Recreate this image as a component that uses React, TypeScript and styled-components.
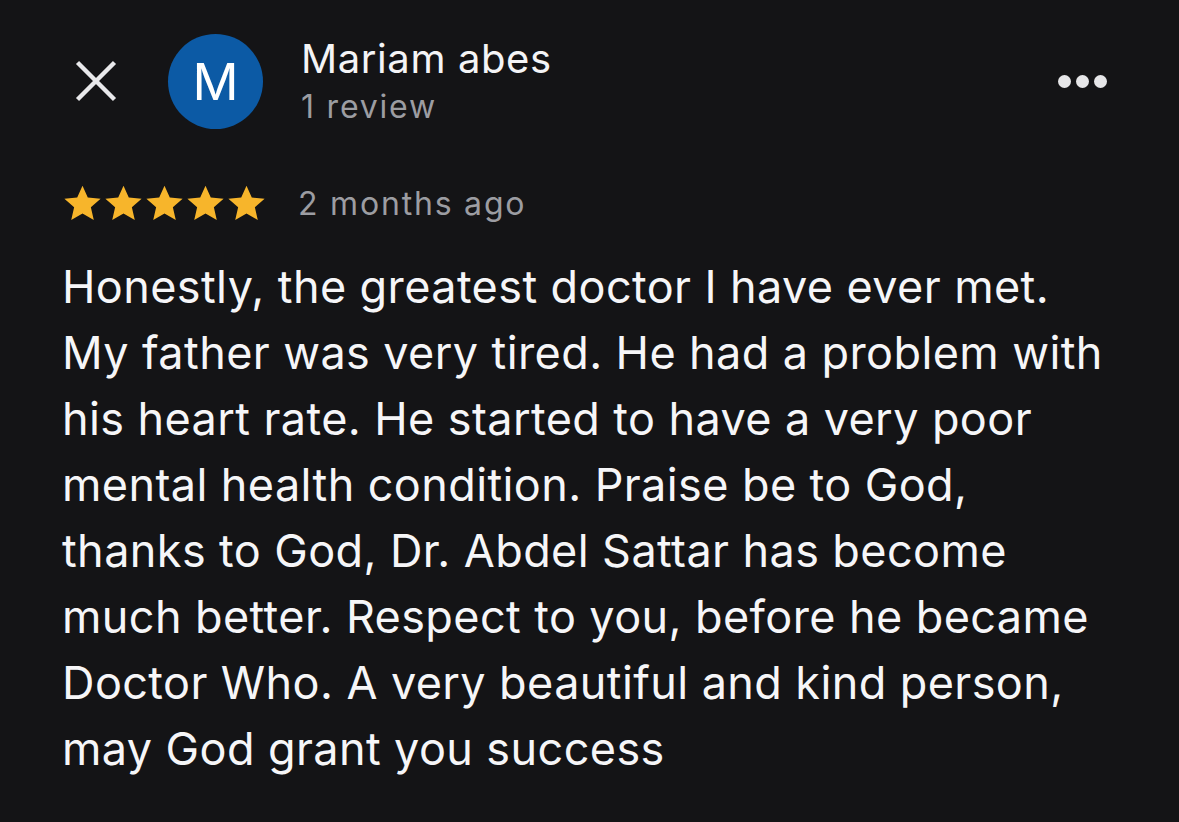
import React from 'react';
import styled, {createGlobalStyle} from 'styled-components';

const GlobalStyle = createGlobalStyle`
  html, body {
    margin: 0;
    padding: 0;
    background: #141416;
  }
  body {
    font-family: Inter, "Noto Sans", sans-serif;
    -webkit-font-smoothing: antialiased;
  }
`;

const Page = styled.div`
  width: 1179px;
  height: 822px;
  box-sizing: border-box;
  padding: 33px 60px 0 62px;
  background: #141416;
  color: #f2f2f4;
  overflow: hidden;
`;

const Header = styled.div`
  display: flex;
  align-items: center;
`;

const CloseButton = styled.button`
  display: flex;
  align-items: center;
  justify-content: center;
  width: 68px;
  height: 96px;
  padding: 0;
  border: none;
  background: none;
  cursor: pointer;
`;

const Avatar = styled.div`
  width: 95px;
  height: 95px;
  margin-left: 38px;
  border-radius: 50%;
  background: #0c5aa5;
  color: #fff;
  display: flex;
  align-items: center;
  justify-content: center;
  font-size: 51px;
  font-weight: 400;
`;

const Author = styled.div`
  display: flex;
  flex-direction: column;
  margin-left: 38px;
  flex: 1;
`;

const Name = styled.div`
  font-size: 40px;
  line-height: 48px;
  letter-spacing: 0.6px;
  color: #f4f4f6;
`;

const Meta = styled.div<{ $gap?: number }>`
  margin-top: ${p => p.$gap ?? 0}px;
  font-size: 32px;
  line-height: 40px;
  letter-spacing: 1.8px;
  color: #9c9da2;
`;

const MoreButton = styled.button`
  display: flex;
  gap: 5px;
  padding: 0;
  border: none;
  background: none;
  margin-right: 12px;
  cursor: pointer;
`;

const Dot = styled.span`
  width: 13px;
  height: 13px;
  border-radius: 50%;
  background: #e6e6e8;
`;

const RatingRow = styled.div`
  display: flex;
  align-items: center;
  margin-top: 54px;
`;

const Stars = styled.div`
  display: flex;
  margin-right: 31px;
`;

const Body = styled.p`
  margin: 30px 0 0;
  font-size: 45px;
  line-height: 66px;
  letter-spacing: 0.4px;
  white-space: nowrap;
  color: #f6f6f8;
`;

const lines = [
    'Honestly, the greatest doctor I have ever met.',
    'My father was very tired. He had a problem with',
    'his heart rate. He started to have a very poor',
    'mental health condition. Praise be to God,',
    'thanks to God, Dr. Abdel Sattar has become',
    'much better. Respect to you, before he became',
    'Doctor Who. A very beautiful and kind person,',
    'may God grant you success',
];

function Star() {
    return (
        <svg width="41" height="41" viewBox="0 0 24 24">
            <path
                fill="#f7b52b"
                d="M12 1.6l3.1 6.9 7.5.7-5.7 5 1.7 7.5L12 17.8l-6.6 3.9 1.7-7.5-5.7-5 7.5-.7z"
            />
        </svg>
    );
}

export default function App() {
    return (
        <Page>
            <GlobalStyle/>
            <Header>
                <CloseButton aria-label="Close">
                    <svg width="42" height="42" viewBox="0 0 42 42">
                        <path d="M2.5 2.5L39.5 39.5M39.5 2.5L2.5 39.5" stroke="#e9e9eb" strokeWidth="4.4"/>
                    </svg>
                </CloseButton>
                <Avatar>M</Avatar>
                <Author>
                    <Name>Mariam abes</Name>
                    <Meta $gap={4}>1 review</Meta>
                </Author>
                <MoreButton aria-label="More">
                    <Dot/><Dot/><Dot/>
                </MoreButton>
            </Header>
            <RatingRow>
                <Stars>
                    {[0, 1, 2, 3, 4].map(i => <Star key={i}/>)}
                </Stars>
                <Meta>2 months ago</Meta>
            </RatingRow>
            <Body>
                {lines.map((line, i) => (
                    <React.Fragment key={i}>
                        {line}
                        {i < lines.length - 1 && <br/>}
                    </React.Fragment>
                ))}
            </Body>
        </Page>
    );
}
